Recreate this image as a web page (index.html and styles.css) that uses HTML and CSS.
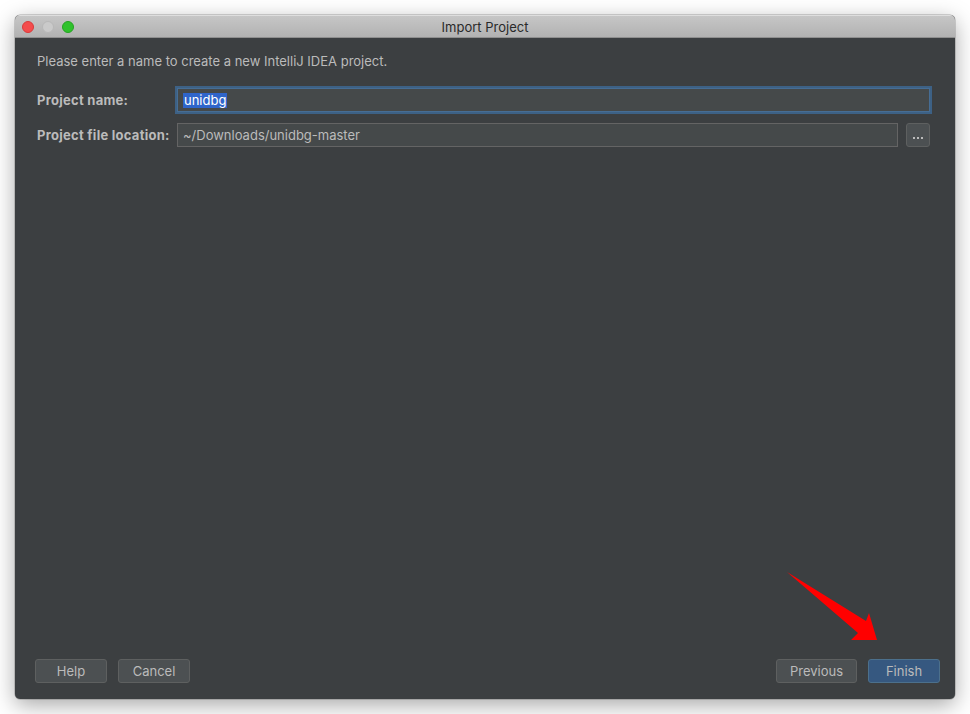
FILE: index.html
```html
<!DOCTYPE html>
<html>
<head>
<meta charset="utf-8">
<link rel="stylesheet" href="styles.css">
</head>
<body>
<div class="window">
  <div class="titlebar">
    <div class="lights">
      <span class="light red"></span>
      <span class="light gray"></span>
      <span class="light green"></span>
    </div>
    <div class="title">Import Project</div>
  </div>
  <div class="content">
    <div class="intro">Please enter a name to create a new IntelliJ IDEA project.</div>
    <div class="row row-first">
      <label class="label">Project name:</label>
      <div class="field focused"><span class="sel">unidbg</span></div>
    </div>
    <div class="row">
      <label class="label">Project file location:</label>
      <div class="field">~/Downloads/unidbg-master</div>
      <div class="browse"><span></span><span></span><span></span></div>
    </div>
    <div class="spacer"></div>
    <div class="footer">
      <div class="group">
        <div class="btn btn-help">Help</div>
        <div class="btn btn-cancel">Cancel</div>
      </div>
      <div class="group">
        <div class="btn btn-prev">Previous</div>
        <div class="btn btn-finish">Finish</div>
      </div>
    </div>
  </div>
  <svg class="arrow" width="100" height="80" viewBox="780 565 100 80">
    <polygon points="787,572 866,621 869,613 877,640 851,640 858,633" fill="#ff0000"/>
  </svg>
</div>
</body>
</html>
```
FILE: styles.css
```css
html, body {
  margin: 0;
  padding: 0;
  background: #ffffff;
}
body {
  width: 970px;
  height: 714px;
  overflow: hidden;
  font-family: Inter, "Liberation Sans", sans-serif;
  font-size: 13px;
}
.window {
  position: relative;
  margin: 15px 0 0 15px;
  width: 940px;
  height: 684px;
  border-radius: 5px;
  overflow: hidden;
  background: #3c3f41;
  box-shadow: 0 6px 22px rgba(0,0,0,0.35), 0 0 0 0.5px rgba(0,0,0,0.3);
  display: flex;
  flex-direction: column;
}
.titlebar {
  height: 21px;
  flex: none;
  display: flex;
  align-items: center;
  position: relative;
  background: linear-gradient(#c6c6c6, #b2b2b2);
  border-top: 1px solid #dedede;
  border-bottom: 1px solid #8f8f8f;
  box-sizing: content-box;
}
.lights {
  display: flex;
  gap: 8px;
  padding-left: 7px;
}
.light {
  width: 12px;
  height: 12px;
  border-radius: 50%;
  box-sizing: border-box;
}
.red { background: #f44c4c; border: 0.5px solid #d83a3a; }
.gray { background: #cacaca; border: 0.5px solid #b8b8b8; }
.green { background: #30c22c; border: 0.5px solid #25a322; }
.title {
  position: absolute;
  left: 0;
  right: 0;
  text-align: center;
  color: #2a2a2a;
  font-size: 13px;
}
.content {
  flex: 1;
  display: flex;
  flex-direction: column;
  padding: 0 25px 16px 22px;
  color: #bbbbbb;
}
.intro {
  margin-top: 14px;
  height: 18px;
  line-height: 18px;
}
.row {
  display: flex;
  align-items: center;
  height: 24px;
}
.row-first {
  margin-top: 18px;
  margin-bottom: 11px;
}
.label {
  width: 140px;
  flex: none;
  font-weight: bold;
  letter-spacing: 0.27px;
}
.field {
  flex: 1;
  height: 24px;
  box-sizing: border-box;
  border: 1px solid #646464;
  background: #45494a;
  padding-left: 5px;
  display: flex;
  align-items: center;
  color: #bbbbbb;
}
.field.focused {
  border-color: #466d94;
  box-shadow: 0 0 0 2px #3d6185;
}
.sel {
  background: #2f65ca;
  color: #ffffff;
  padding: 0 1px;
  line-height: 15px;
}
.browse {
  width: 24px;
  height: 24px;
  margin-left: 8px;
  box-sizing: border-box;
  border: 1px solid #5e6060;
  border-radius: 3px;
  background: #4c5052;
  display: flex;
  align-items: center;
  justify-content: center;
  gap: 2px;
  padding-top: 5px;
}
.browse span {
  width: 2px;
  height: 2px;
  background: #bbbbbb;
}
.spacer { flex: 1; }
.footer {
  display: flex;
  justify-content: space-between;
  margin-left: -2px;
  margin-right: -10px;
}
.group {
  display: flex;
  gap: 11px;
}
.btn {
  height: 24px;
  box-sizing: border-box;
  border: 1px solid #5e6060;
  border-radius: 3px;
  background: #4c5052;
  color: #bbbbbb;
  display: flex;
  align-items: center;
  justify-content: center;
  width: 72px;
}
.btn-prev { width: 81px; }
.btn-finish {
  background: #365880;
  border-color: #4c708c;
}
.arrow {
  position: absolute;
  left: 765px;
  top: 550px;
}
```
